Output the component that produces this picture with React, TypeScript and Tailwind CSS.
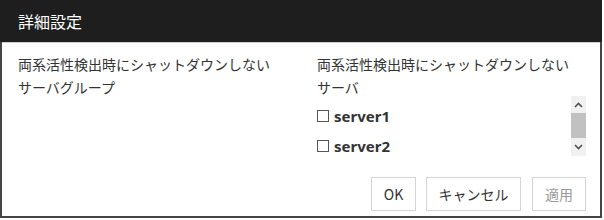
const font = { fontFamily: '"Noto Sans CJK JP", "Noto Sans", sans-serif' };

function Checkbox() {
  return <span className="inline-block w-[12px] h-[12px] border border-[#555] bg-white mr-[5px] shrink-0" />;
}

function ScrollBar() {
  return (
    <div className="w-[15px] h-[60px] bg-[#f1f1f1] flex flex-col items-center">
      <div className="h-[17px] w-full flex items-center justify-center">
        <svg width="9" height="6" viewBox="0 0 9 6">
          <path d="M1 5 L4.5 1.5 L8 5" fill="none" stroke="#505050" strokeWidth="1.6" />
        </svg>
      </div>
      <div className="w-full h-[25px] bg-[#c1c1c1]" />
      <div className="flex-1 w-full flex items-center justify-center">
        <svg width="9" height="6" viewBox="0 0 9 6">
          <path d="M1 1 L4.5 4.5 L8 1" fill="none" stroke="#505050" strokeWidth="1.6" />
        </svg>
      </div>
    </div>
  );
}

export default function App() {
  const servers = ['server1', 'server2'];

  return (
    <div className="w-[604px] h-[220px] bg-white" style={font}>
      <div className="w-[602px] h-[218px] bg-[#454545] flex flex-col">
        <div className="h-[42px] bg-[#1e1e1e] flex items-center pl-[18px]">
          <span className="text-white text-[16px] leading-none">詳細設定</span>
        </div>
        <div className="h-px bg-[#d0d0d0] mx-[2px]" />
        <div className="flex-1 mx-[2px] mb-[2px] bg-white flex flex-col pl-[16px] pr-[14px] pt-[10px]">
          <div className="flex">
            <div className="w-[299px] text-[14px] leading-[23px] text-[#333]">
              <p>両系活性検出時にシャットダウンしない</p>
              <p>サーバグループ</p>
            </div>
            <div className="flex-1 flex flex-col">
              <div className="text-[14px] leading-[23px] text-[#333] h-[43px]">
                <p>両系活性検出時にシャットダウンしない</p>
                <p>サーバ</p>
              </div>
              <div className="flex">
                <div className="flex-1 pt-[5px]">
                  {servers.map((s) => (
                    <div key={s} className="h-[30px] flex items-center">
                      <Checkbox />
                      <span
                        className="text-[15px] font-bold text-[#333]"
                        style={{ fontFamily: '"Noto Sans", sans-serif' }}
                      >
                        {s}
                      </span>
                    </div>
                  ))}
                </div>
                <ScrollBar />
              </div>
            </div>
          </div>
          <div className="flex justify-end mt-[16px] pr-[0px]">
            <button className="w-[45px] h-[34px] border border-[#d4d4d4] bg-white text-[14px] text-[#333]">OK</button>
            <button className="w-[95px] h-[34px] ml-[10px] border border-[#d4d4d4] bg-white text-[14px] text-[#333]">キャンセル</button>
            <button className="w-[54px] h-[34px] ml-[11px] border border-[#d4d4d4] bg-white text-[14px] text-[#9a9a9a]">適用</button>
          </div>
        </div>
      </div>
    </div>
  );
}
